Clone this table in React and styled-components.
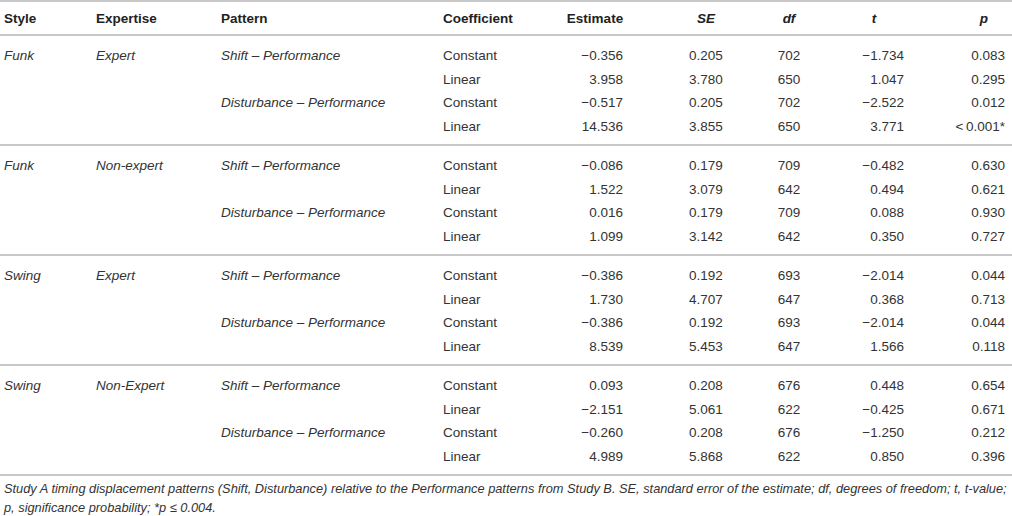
import React from "react";
import styled, { createGlobalStyle } from "styled-components";

const GlobalStyle = createGlobalStyle`
  body {
    margin: 0;
    background: #fff;
    font-family: "Liberation Sans", Arial, sans-serif;
    color: #333;
  }
`;

const Wrapper = styled.div`
  width: 1012px;
`;

const Table = styled.table`
  width: 1012px;
  border-collapse: collapse;
  table-layout: fixed;
  font-size: 13.5px;
`;

const HeadRow = styled.tr`
  border-top: 2px solid #c8c8c8;
  border-bottom: 2px solid #c8c8c8;
`;

const Th = styled.th`
  height: 32px;
  padding: 0 ${(p) => p.$pr || 0}px 0 ${(p) => p.$pl || 0}px;
  text-align: ${(p) => p.$align};
  font-weight: bold;
  font-style: ${(p) => (p.$italic ? "italic" : "normal")};
  color: #222;
  vertical-align: middle;
`;

const Group = styled.tbody`
  border-bottom: 2px solid #c8c8c8;

  tr:first-child td {
    padding-top: 8px;
  }
  tr:last-child td {
    padding-bottom: 6px;
  }
`;

const Td = styled.td`
  padding: 0 ${(p) => p.$pr || 0}px 0 ${(p) => p.$pl || 0}px;
  line-height: 23.5px;
  text-align: ${(p) => p.$align};
  font-style: ${(p) => (p.$italic ? "italic" : "normal")};
  white-space: nowrap;
`;

const Caption = styled.p`
  margin: 0;
  padding: 3px 4px 0;
  font-size: 12.8px;
  line-height: 19px;
  font-style: italic;
  color: #333;
`;

const columns = [
  { key: "style", width: 92, label: "Style", align: "left", pl: 4, italic: true },
  { key: "expertise", width: 125, label: "Expertise", align: "left", pl: 4, italic: true },
  { key: "pattern", width: 222, label: "Pattern", align: "left", pl: 4, italic: true },
  { key: "coef", width: 101, label: "Coefficient", align: "left", pl: 4 },
  { key: "est", width: 110, label: "Estimate", headAlign: "center", align: "right", pr: 27 },
  { key: "se", width: 112, label: "SE", headItalic: true, headAlign: "center", align: "center" },
  { key: "df", width: 54, label: "df", headItalic: true, headAlign: "center", align: "center" },
  { key: "t", width: 116, label: "t", headItalic: true, headAlign: "center", align: "right", pr: 28 },
  { key: "p", width: 80, label: "p", headItalic: true, headAlign: "right", headPr: 24, align: "right", pr: 7 },
];

const M = "\u2212";

const groups = [
  {
    style: "Funk",
    expertise: "Expert",
    rows: [
      ["Shift – Performance", "Constant", M + "0.356", "0.205", "702", M + "1.734", "0.083"],
      ["", "Linear", "3.958", "3.780", "650", "1.047", "0.295"],
      ["Disturbance – Performance", "Constant", M + "0.517", "0.205", "702", M + "2.522", "0.012"],
      ["", "Linear", "14.536", "3.855", "650", "3.771", "<\u20090.001*"],
    ],
  },
  {
    style: "Funk",
    expertise: "Non-expert",
    rows: [
      ["Shift – Performance", "Constant", M + "0.086", "0.179", "709", M + "0.482", "0.630"],
      ["", "Linear", "1.522", "3.079", "642", "0.494", "0.621"],
      ["Disturbance – Performance", "Constant", "0.016", "0.179", "709", "0.088", "0.930"],
      ["", "Linear", "1.099", "3.142", "642", "0.350", "0.727"],
    ],
  },
  {
    style: "Swing",
    expertise: "Expert",
    rows: [
      ["Shift – Performance", "Constant", M + "0.386", "0.192", "693", M + "2.014", "0.044"],
      ["", "Linear", "1.730", "4.707", "647", "0.368", "0.713"],
      ["Disturbance – Performance", "Constant", M + "0.386", "0.192", "693", M + "2.014", "0.044"],
      ["", "Linear", "8.539", "5.453", "647", "1.566", "0.118"],
    ],
  },
  {
    style: "Swing",
    expertise: "Non-Expert",
    rows: [
      ["Shift – Performance", "Constant", "0.093", "0.208", "676", "0.448", "0.654"],
      ["", "Linear", M + "2.151", "5.061", "622", M + "0.425", "0.671"],
      ["Disturbance – Performance", "Constant", M + "0.260", "0.208", "676", M + "1.250", "0.212"],
      ["", "Linear", "4.989", "5.868", "622", "0.850", "0.396"],
    ],
  },
];

const App = () => {
  return (
    <Wrapper>
      <GlobalStyle />
      <Table>
        <colgroup>
          {columns.map((c) => (
            <col key={c.key} style={{ width: c.width }} />
          ))}
        </colgroup>
        <thead>
          <HeadRow>
            {columns.map((c) => (
              <Th
                key={c.key}
                $align={c.headAlign || c.align}
                $pl={c.pl}
                $pr={c.headPr}
                $italic={c.headItalic}
              >
                {c.label}
              </Th>
            ))}
          </HeadRow>
        </thead>
        {groups.map((g, gi) => (
          <Group key={gi}>
            {g.rows.map((r, ri) => {
              const cells = [ri === 0 ? g.style : "", ri === 0 ? g.expertise : "", ...r];
              return (
                <tr key={ri}>
                  {columns.map((c, ci) => (
                    <Td key={c.key} $align={c.align} $pl={c.pl} $pr={c.pr} $italic={c.italic}>
                      {cells[ci]}
                    </Td>
                  ))}
                </tr>
              );
            })}
          </Group>
        ))}
      </Table>
      <Caption>
        Study A timing displacement patterns (Shift, Disturbance) relative to the Performance
        patterns from Study B. SE, standard error of the estimate; df, degrees of freedom; t,
        t-value; p, significance probability; *p ≤ 0.004.
      </Caption>
    </Wrapper>
  );
};

export default App;
